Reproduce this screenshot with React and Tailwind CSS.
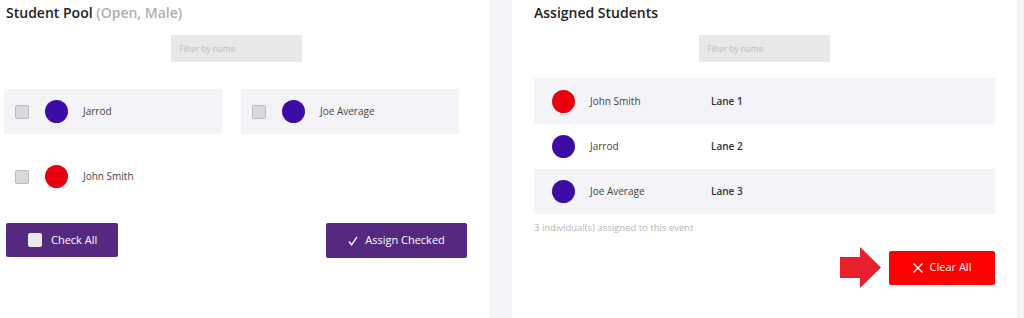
const pool = [
  { name: "Jarrod", color: "bg-[#3c0ca6]", shaded: true },
  { name: "Joe Average", color: "bg-[#3c0ca6]", shaded: true },
  { name: "John Smith", color: "bg-[#e8000f]", shaded: false },
];

const assigned = [
  { name: "John Smith", lane: "Lane 1", color: "bg-[#e8000f]", shaded: true, h: "h-[46px]" },
  { name: "Jarrod", lane: "Lane 2", color: "bg-[#3c0ca6]", shaded: false, h: "h-[45px]" },
  { name: "Joe Average", lane: "Lane 3", color: "bg-[#3c0ca6]", shaded: true, h: "h-[45px]" },
];

const FilterInput = () => (
  <input
    placeholder="Filter by name"
    className="w-[131px] h-[27px] bg-[#e8e8e8] px-[8px] text-[8.5px] text-[#555] placeholder:text-[#bdbdbd] outline-none"
  />
);

const App = () => {
  return (
    <div
      className="flex h-[318px] w-[1024px] bg-[#f4f4f8] overflow-hidden text-[#333]"
      style={{ fontFamily: '"Open Sans", "Noto Sans", sans-serif' }}
    >
      {/* Student Pool */}
      <div className="w-[490px] bg-white pl-[6px] pr-[23px] pt-[3px]">
        <h2 className="text-[14px] leading-[20px] font-semibold text-[#222]">
          Student Pool <span className="text-[#b0b0b0]">(Open, Male)</span>
        </h2>

        <div className="flex justify-center mt-[12px]">
          <FilterInput />
        </div>

        <div className="grid grid-cols-[218px_218px] gap-x-[19px] gap-y-[20px] mt-[27px] -ml-[2px]">
          {pool.map((s) => (
            <div
              key={s.name}
              className={`flex items-center h-[45px] ${s.shaded ? "bg-[#f4f4f8]" : ""}`}
            >
              <span className="ml-[11px] w-[14px] h-[14px] rounded-[2px] bg-[#d9d9d9] border border-[#bcbcbc]"></span>
              <span className={`ml-[16px] w-[23px] h-[23px] rounded-full ${s.color}`}></span>
              <span className="ml-[15px] text-[10px] text-[#444]">{s.name}</span>
            </div>
          ))}
        </div>

        <div className="flex justify-between mt-[24px]">
          <button className="flex items-center w-[112px] h-[34px] rounded-[2px] bg-[#54297f] text-white text-[11px]">
            <span className="ml-[22px] w-[14px] h-[14px] rounded-[2px] bg-[#e9e9ee]"></span>
            <span className="ml-[9px]">Check All</span>
          </button>
          <button className="flex items-center justify-center gap-[7px] w-[141px] h-[35px] rounded-[2px] bg-[#54297f] text-white text-[11px]">
            <svg width="10" height="10" viewBox="0 0 10 10" fill="none" stroke="white" strokeWidth="1.3">
              <polyline points="1,5.5 3.6,8.8 9,0.8" />
            </svg>
            <span>Assign Checked</span>
          </button>
        </div>
      </div>

      {/* Assigned Students */}
      <div className="w-[505px] ml-[22px] bg-white px-[22px] pt-[3px]">
        <h2 className="text-[14px] leading-[20px] font-semibold text-[#222]">Assigned Students</h2>

        <div className="flex justify-center mt-[12px]">
          <FilterInput />
        </div>

        <div className="mt-[16px]">
          {assigned.map((s) => (
            <div
              key={s.name}
              className={`flex items-center ${s.h} ${s.shaded ? "bg-[#f4f4f8]" : ""}`}
            >
              <span className={`ml-[18px] w-[23px] h-[23px] rounded-full ${s.color}`}></span>
              <span className="ml-[15px] w-[121px] text-[10px] text-[#444]">{s.name}</span>
              <span className="text-[10px] font-semibold text-[#333]">{s.lane}</span>
            </div>
          ))}
        </div>

        <p className="mt-[7px] text-[9.5px] leading-[14px] text-[#b5b5b5]">
          3 individual(s) assigned to this event
        </p>

        <div className="flex justify-end items-center mt-[12px]">
          <svg width="41" height="41" viewBox="0 0 41 41" className="mr-[8px]">
            <polygon points="0,10 20,10 20,0 41,20.5 20,41 20,31 0,31" fill="#e8202b" />
          </svg>
          <button className="flex items-center justify-center gap-[7px] w-[106px] h-[34px] rounded-[2px] bg-[#ff0000] text-white text-[11px]">
            <svg width="10" height="10" viewBox="0 0 10 10" fill="none" stroke="white" strokeWidth="1.2">
              <line x1="0.5" y1="0.5" x2="9.5" y2="9.5" />
              <line x1="9.5" y1="0.5" x2="0.5" y2="9.5" />
            </svg>
            <span>Clear All</span>
          </button>
        </div>
      </div>
    </div>
  );
};

export default App;
